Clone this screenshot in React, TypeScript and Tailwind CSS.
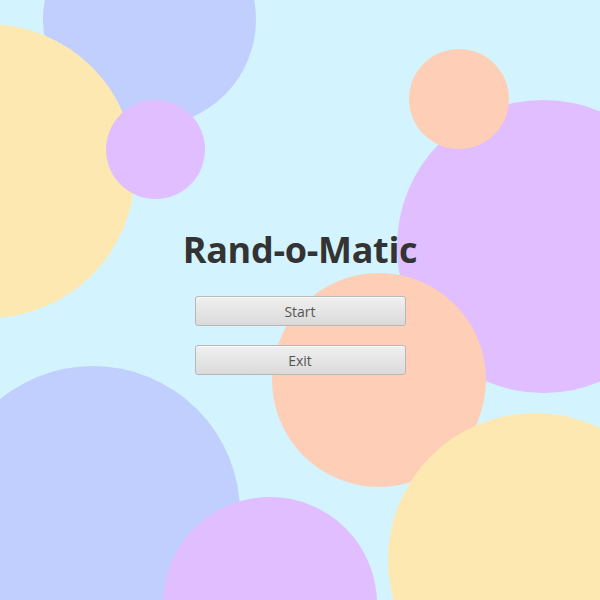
const circles = [
  { cls: "left-[43px] top-[-87px] size-[213px] bg-[#c1cffe]" },
  { cls: "left-[-159px] top-[24px] size-[294px] bg-[#fee8b2]" },
  { cls: "left-[106px] top-[100px] size-[99px] bg-[#e0beff]" },
  { cls: "left-[397px] top-[100px] size-[293px] bg-[#e0beff]" },
  { cls: "left-[409px] top-[49px] size-[100px] bg-[#fecfb6]" },
  { cls: "left-[272px] top-[273px] size-[214px] bg-[#fecfb6]" },
  { cls: "left-[-54px] top-[366px] size-[294px] bg-[#c1cffe]" },
  { cls: "left-[163px] top-[497px] size-[214px] bg-[#e0beff]" },
  { cls: "left-[388px] top-[413px] size-[294px] bg-[#fee8b2]" },
];

export default function App() {
  return (
    <div className="relative w-[600px] h-[600px] overflow-hidden bg-[#d3f4fe] font-['Open_Sans',sans-serif]">
      {circles.map((c, i) => (
        <div key={i} className={`absolute rounded-full ${c.cls}`} />
      ))}

      <div className="relative flex flex-col items-center pt-[224px]">
        <h1 className="text-[36px] leading-[52px] font-bold text-[#333333] tracking-[-0.3px]">
          Rand-o-Matic
        </h1>
        <div className="mt-[20px] flex flex-col gap-[19px]">
          {["Start", "Exit"].map((label) => (
            <button
              key={label}
              className="w-[211px] h-[30px] rounded-[3px] border border-[#b8b8b8] bg-gradient-to-b from-[#f0f0f0] to-[#dadada] text-[14px] text-[#555555] shadow-[inset_0_1px_0_#fafafa]"
            >
              {label}
            </button>
          ))}
        </div>
      </div>
    </div>
  );
}
